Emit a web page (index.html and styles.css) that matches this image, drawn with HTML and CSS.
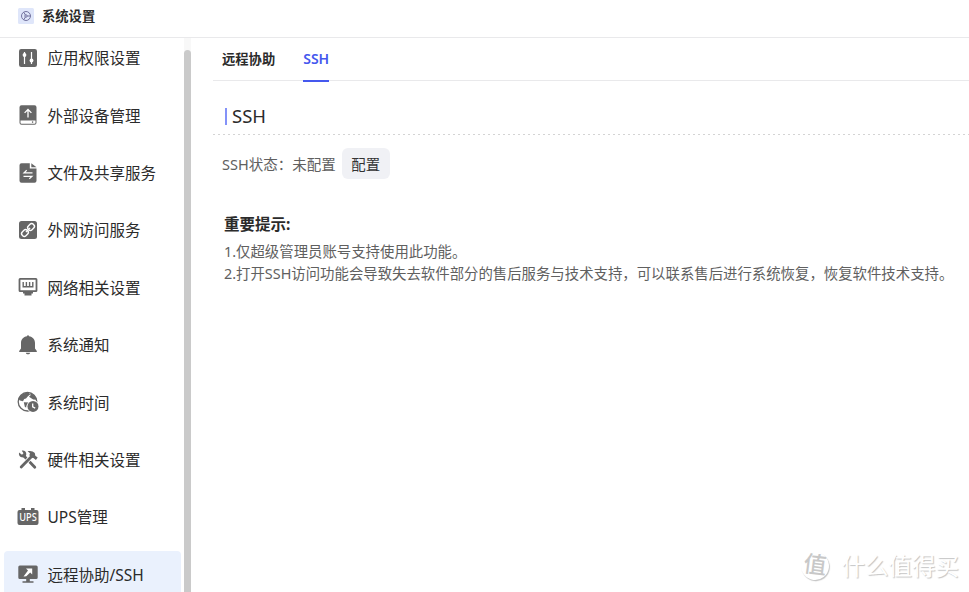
FILE: index.html
```html
<!DOCTYPE html>
<html lang="zh-CN">
<head>
  <meta charset="UTF-8">
  <meta name="viewport" content="width=device-width, initial-scale=1">
  <title>系统设置</title>
  <link rel="stylesheet" href="styles.css">
</head>
<body>
  <!-- Window title -->
  <header class="titlebar">
    <svg class="logo" viewBox="0 0 16 16">
      <rect width="16" height="16" rx="1.5" fill="#dfe6fa"/>
      <g fill="none" stroke="#73739f" stroke-width="1">
        <circle cx="8" cy="8" r="4.5"/>
        <circle cx="8" cy="8" r="1.2"/>
        <path d="M9.2 8h3.3M7.4 7L5.8 4.2M7.4 9l-1.6 2.8"/>
      </g>
    </svg>
    <h1>系统设置</h1>
  </header>

  <div class="layout">
    <!-- Side menu -->
    <nav class="sidebar">
      <ul class="menu">
        <li class="item">
          <svg class="icon" viewBox="0 0 22 22">
            <rect x="2" y="2" width="18" height="18" rx="2.2" fill="#666"/>
            <path d="M7.5 5v12M14.5 5v12" stroke="#fff" stroke-width="1.2"/>
            <circle cx="7.5" cy="8" r="1.9" fill="#fff"/>
            <circle cx="14.5" cy="13.5" r="1.9" fill="#fff"/>
          </svg>
          <span>应用权限设置</span>
        </li>
        <li class="item">
          <svg class="icon" viewBox="0 0 22 22">
            <path d="M4.5 1.3h13a2 2 0 0 1 2 2v15.4a2 2 0 0 1-2 2h-13a2 2 0 0 1-2-2V3.3a2 2 0 0 1 2-2z" fill="#666"/>
            <path d="M3.5 16.5h15v2.2a1 1 0 0 1-1 1h-13a1 1 0 0 1-1-1z" fill="#fff"/>
            <circle cx="15.6" cy="18.1" r=".8" fill="#666"/>
            <path d="M11 13.5V5.7M7.6 8.9L11 5.5l3.4 3.4" fill="none" stroke="#fff" stroke-width="1.3"/>
          </svg>
          <span>外部设备管理</span>
        </li>
        <li class="item">
          <svg class="icon" viewBox="0 0 22 22">
            <path d="M4.5 1.3h8.3v5.2h6.7v12.2a2 2 0 0 1-2 2h-13a2 2 0 0 1-2-2V3.3a2 2 0 0 1 2-2z" fill="#666"/>
            <path d="M14.3 1.3l5.2 4h-5.2z" fill="#666"/>
            <path d="M15.5 10.9H7l2.7-2.6M6.500 14.3H15l-2.7 2.6" fill="none" stroke="#fff" stroke-width="1.2"/>
          </svg>
          <span>文件及共享服务</span>
        </li>
        <li class="item">
          <svg class="icon" viewBox="0 0 22 22">
            <rect x="2" y="2" width="18" height="18" rx="2.5" fill="#666"/>
            <g fill="none" stroke="#fff" stroke-width="1.4" transform="rotate(-45 11 11)">
              <rect x="3.2" y="8.4" width="7" height="5.2" rx="2.3"/>
              <rect x="11.8" y="8.4" width="7" height="5.2" rx="2.3"/>
              <path d="M8 11h6"/>
            </g>
          </svg>
          <span>外网访问服务</span>
        </li>
        <li class="item">
          <svg class="icon" viewBox="0 0 22 22">
            <rect x="2.5" y="2.8" width="17" height="12.4" rx=".6" fill="none" stroke="#666" stroke-width="1.8"/>
            <path d="M6.2 6v4.8h9.6V6M9.4 6v4.8M12.6 6v4.8" fill="none" stroke="#666" stroke-width="1.4"/>
            <path d="M6 15.5h10v2h-1.5v2h-7v-2H6z" fill="#666"/>
          </svg>
          <span>网络相关设置</span>
        </li>
        <li class="item">
          <svg class="icon" viewBox="0 0 22 22">
            <path d="M10 2.2a1 1 0 0 1 2 0c3.7.5 6 3.2 6 6.8v5.5l1.8 2.5v1H2.2v-1L4 14.500V9c0-3.600 2.300-6.300 6-6.800z" fill="#666"/>
            <path d="M8.8 18.8h4.400c-.3 1-1.100 1.500-2.200 1.500s-1.900-.5-2.200-1.500z" fill="#666"/>
          </svg>
          <span>系统通知</span>
        </li>
        <li class="item">
          <svg class="icon" viewBox="0 0 22 22">
            <circle cx="10.5" cy="10.7" r="9.3" fill="#fff" stroke="#666" stroke-width="1.3"/>
            <path d="M2 6.500C4 3 7.500 1.400 11.500 1.700l1.800 1.500-2.600 2.200-1.700 2-1.800.6-1.200 2.200-3-.6-1.300-1.300z" fill="#666"/>
            <path d="M13 2c3.500.9 6 3.500 6.700 6.800l-3.500-.4-2.700-1.700-1.500-1 1.600-1.500zM6.800 11.300l5.500.3-2.500 2.200-.6 2.700-1.300-.5z" fill="#666"/>
            <circle cx="16" cy="15.4" r="6.3" fill="#fff"/>
            <circle cx="16" cy="15.4" r="5.5" fill="#666"/>
            <path d="M15.700 12.400v3.500l2.500 1.200" fill="none" stroke="#fff" stroke-width="1.3"/>
          </svg>
          <span>系统时间</span>
        </li>
        <li class="item">
          <svg class="icon" viewBox="0 0 22 22">
            <path d="M7 7l10.8 11.3" stroke="#666" stroke-width="2.8" stroke-linecap="round"/>
            <path d="M2 3.5l3 2.200 1.500-1.500-1.700-2.500c2.600-.5 4.700 1.200 4.500 3.800-.2 2.300-2.200 3.400-4.700 2.800C2.700 7.900 1.500 6.200 2 3.500z" fill="#666"/>
            <path d="M14.500 7.500l-10 10.300" stroke="#fff" stroke-width="4.6"/>
            <path d="M14.800 7.200L4.200 18" stroke="#666" stroke-width="2.8" stroke-linecap="round"/>
            <path d="M10.600 2.300c2.900-.8 5.400-.2 7.200 1.800l.5 2.600 2.400 1.900-1.800 2.300-2.500-1.900-1.600-.3-2.500-2.500.7-2z" fill="#666"/>
          </svg>
          <span>硬件相关设置</span>
        </li>
        <li class="item">
          <svg class="icon" viewBox="0 0 22 22">
            <path d="M2.500 4h2V2H8v2h6V2h3.500v2h2a2 2 0 0 1 2 2v11a2 2 0 0 1-2 2h-17a2 2 0 0 1-2-2V6a2 2 0 0 1 2-2z" fill="#666"/>
            <text class="ups" x="11" y="15.2" text-anchor="middle" textLength="17.5" lengthAdjust="spacingAndGlyphs">UPS</text>
          </svg>
          <span>UPS管理</span>
        </li>
        <li class="item active">
          <svg class="icon" viewBox="0 0 22 22">
            <path d="M2.800 2.500h16.400A1.500 1.500 0 0 1 20.700 4v10.500a1.500 1.500 0 0 1-1.500 1.500h-6.400v2.200h3.700v1.600h-11v-1.600h3.700V16H2.800a1.500 1.500 0 0 1-1.500-1.500V4a1.500 1.500 0 0 1 1.500-1.500z" fill="#666"/>
            <path d="M9 5.500h6.200v6l-2-2-3.900 3.700-2.800.2 4.500-5.900z" fill="#fff"/>
          </svg>
          <span>远程协助/SSH</span>
        </li>
      </ul>
      <div class="scrollbar"><div class="thumb"></div></div>
    </nav>

    <!-- Settings panel -->
    <main class="content">
      <div class="tabs">
        <a class="tab">远程协助</a>
        <a class="tab current">SSH</a>
      </div>
      <h2 class="section-title">SSH</h2>
      <div class="status">
        <span>SSH状态：</span>
        <span>未配置</span>
        <button class="btn">配置</button>
      </div>
      <section class="tips">
        <h3>重要提示:</h3>
        <p>1.仅超级管理员账号支持使用此功能。</p>
        <p>2.打开SSH访问功能会导致失去软件部分的售后服务与技术支持，可以联系售后进行系统恢复，恢复软件技术支持。</p>
      </section>
    </main>
  </div>

  <!-- Watermark over the page corner -->
  <div class="watermark">
    <span class="seal">值</span>
    <span>什么值得买</span>
  </div>
</body>
</html>
```
FILE: styles.css
```css
:root {
  --text: #2b2b2b;
  --muted: #606060;
  --blue: #4558ee;
  --line: #e9e9eb;
  --font-stack: "Noto Sans", "Noto Sans CJK SC", sans-serif;
}
* {box-sizing: border-box; margin: 0; padding: 0;}
body {
  font-family: var(--font-stack);
  background: #fff;
  color: var(--text);
  height: 100vh;
  display: flex;
  flex-direction: column;
  overflow: hidden;
}

/* Title bar */
.titlebar {
  flex: none;
  height: 38px;
  display: flex;
  align-items: center;
  gap: 8px;
  padding: 0 18px 5px;
  border-bottom: 1px solid var(--line);
}
.logo {width: 16px; height: 16px;}
h1 {font-size: 13.3px; line-height: 20px; font-weight: 700;}

.layout {flex: 1; min-height: 0; display: flex;}

/* Side menu */
.sidebar {width: 191px; display: flex; justify-content: space-between; overflow: hidden;}
.menu {
  list-style: none;
  width: 181px;
  padding-left: 4px;
  margin-top: -3.2px;
  display: flex;
  flex-direction: column;
  gap: 11.4px;
}
.item {
  flex: none;
  height: 46px;
  display: flex;
  align-items: center;
  gap: 9px;
  padding-left: 12.5px;
  border-radius: 4px;
  font-size: 15.5px;
  white-space: nowrap;
}
.item.active {background: #eaf1fd;}
.icon {flex: none; width: 22px; height: 22px;}
.ups {font-size: 11px; font-weight: 500; fill: #fff;}
.scrollbar {width: 7px; padding-top: 12px; background: #f8f8f8; display: flex;}
.thumb {flex: 1; background: #cacaca; border-radius: 4px 4px 0 0;}

/* Settings panel */
.content {flex: 1; min-width: 0; padding-left: 22px;}
.tabs {
  height: 43px;
  display: flex;
  gap: 28px;
  padding-left: 9px;
  border-bottom: 1px solid var(--line);
}
.tab {height: 44px; line-height: 43px; font-size: 13.3px; font-weight: 700;}
.tab.current {font-size: 14px; line-height: 41px; font-weight: 600; color: var(--blue); border-bottom: 2px solid var(--blue);}
.section-title {
  height: 54px;
  padding: 16px 0 0 12px;
  font-size: 18.5px;
  line-height: 36px;
  font-weight: 400;
  display: flex;
  align-items: center;
  gap: 5px;
  background: linear-gradient(90deg, #d4d4d4 50%, transparent 50%) bottom left / 5px 1px repeat-x;
}
.section-title::before {content: ""; width: 2px; height: 17px; background: #8492f8;}
.status {
  display: flex;
  align-items: center;
  margin-top: 13px;
  padding-left: 9px;
  font-size: 14.5px;
  line-height: 30px;
  color: var(--muted);
}
.btn {
  width: 48px; height: 31px; margin-left: 6px; padding-bottom: 1px;
  border: none; border-radius: 6px; background: #f0f1f5;
  font: 14.4px var(--font-stack); color: #333;
}
.tips {padding: 32px 0 0 11px; font-size: 14.4px; line-height: 22px; color: var(--muted); white-space: nowrap;}
.tips h3 {font-size: 15.5px; line-height: 26px; color: var(--text); margin-bottom: 4px;}

/* Watermark */
.watermark {
  position: absolute;
  right: 10px;
  bottom: 9px;
  display: flex;
  align-items: center;
  gap: 13px;
  font-size: 23.5px;
  line-height: 34px;
  color: #fff;
  text-shadow: 1px 1px 1px #c4c4c4;
}
.seal {
  width: 28px; height: 28px;
  border-radius: 50%;
  font-size: 23px; line-height: 24px; text-align: center;
  font-weight: 500; color: #c8c8c8; text-shadow: none;
  transform: rotate(7deg);
  box-shadow: 1px 1px 1px #c4c4c4;
}
```
